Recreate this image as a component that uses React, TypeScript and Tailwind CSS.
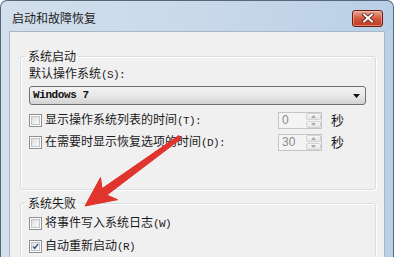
import React from "react";

const CJK = '"Noto Sans CJK SC", "Noto Sans", sans-serif';

function Latin({ children }: { children: React.ReactNode }) {
  return (
    <span className="text-[11px] tracking-[-0.6px]" style={{ fontFamily: '"Liberation Mono", monospace' }}>
      {children}
    </span>
  );
}

function CheckBox({ checked }: { checked?: boolean }) {
  return (
    <div className="w-[13px] h-[13px] shrink-0 border border-[#8e8f8f] bg-white p-[1px]">
      <div className="w-full h-full border border-[#c3c3c3] bg-gradient-to-br from-[#dedede] to-[#fbfbfb] relative">
        {checked && (
          <svg viewBox="0 0 9 9" className="absolute inset-0 w-full h-full">
            <path d="M1.5 4.5 L3.6 7 L7.6 1.4" fill="none" stroke="#3b4e85" strokeWidth="1.8" />
          </svg>
        )}
      </div>
    </div>
  );
}

function Spin({ value }: { value: string }) {
  return (
    <div className="w-[44px] h-[17px] border border-[#c5c5c5] bg-[#f4f4f4] flex">
      <div
        className="flex-1 pl-[3px] text-[12px] leading-[15px] text-[#8a8a8a]"
        style={{ fontFamily: '"Liberation Sans", sans-serif' }}
      >
        {value}
      </div>
      <div className="w-[15px] flex flex-col gap-[1px]">
        <div className="flex-1 border border-[#d2d2d2] rounded-[2px] bg-gradient-to-b from-[#f6f6f6] to-[#e6e6e6] flex items-center justify-center">
          <svg width="5" height="3" viewBox="0 0 5 3">
            <path d="M0 3 L2.5 0 L5 3 Z" fill="#a8a8a8" />
          </svg>
        </div>
        <div className="flex-1 border border-[#d2d2d2] rounded-[2px] bg-gradient-to-b from-[#f6f6f6] to-[#e6e6e6] flex items-center justify-center">
          <svg width="5" height="3" viewBox="0 0 5 3">
            <path d="M0 0 L5 0 L2.5 3 Z" fill="#a8a8a8" />
          </svg>
        </div>
      </div>
    </div>
  );
}

function Row({
  checked,
  label,
  hotkey,
  spin,
  className,
}: {
  checked?: boolean;
  label: string;
  hotkey: string;
  spin?: string;
  className?: string;
}) {
  return (
    <div className={"h-[18px] flex items-center " + (className ?? "")}>
      <CheckBox checked={checked} />
      <div className="ml-[3px] flex-1 text-[12px] leading-[14px] text-[#1b1b1b] whitespace-nowrap">
        {label}
        <Latin>{hotkey}</Latin>
      </div>
      {spin !== undefined && (
        <div className="w-[88px] flex items-center">
          <Spin value={spin} />
          <span className="ml-[9px] text-[13px] leading-[14px] text-[#1b1b1b]">秒</span>
        </div>
      )}
    </div>
  );
}

export default function App() {
  return (
    <div
      className="w-[394px] h-[257px] overflow-hidden relative rounded-t-[7px] border border-b-0 border-[#56677a] bg-gradient-to-r from-[#d3dfeb] via-[#c9d9ea] to-[#b9cfe7] flex flex-col"
      style={{ fontFamily: CJK }}
    >
      {/* title bar */}
      <div className="h-[30px] shrink-0 flex items-center justify-between pl-[11px] pr-[10px] pt-[4px]">
        <span className="text-[12px] leading-[14px] text-[#1e1e1e]">启动和故障恢复</span>
        <div className="w-[31px] h-[17px] rounded-[3px] border border-[#6b1c10] bg-gradient-to-b from-[#e9a796] via-[#d2573d] to-[#c23a1f] flex items-center justify-center shadow-[inset_0_0_0_1px_rgba(255,200,180,0.5)]">
          <svg width="12" height="10" viewBox="0 0 12 10">
            <path d="M2 1.5 L10 8.5 M10 1.5 L2 8.5" stroke="#5a1a0e" strokeWidth="3.6" strokeLinecap="square" />
            <path d="M2 1.5 L10 8.5 M10 1.5 L2 8.5" stroke="#ffffff" strokeWidth="2" strokeLinecap="square" />
          </svg>
        </div>
      </div>

      {/* client */}
      <div className="flex-1 px-[8px] flex">
        <div className="flex-1 bg-[#f0f0f0] border border-b-0 border-[#a7b7c9] pl-[10px] pr-[8px]">
          <fieldset className="mt-[17px] border border-[#d5dfe5] rounded-[3px] shadow-[inset_1px_1px_0_#ffffff,1px_1px_0_#ffffff]">
            <legend className="ml-[5px] px-[2px] text-[12px] leading-[14px] text-[#1b1b1b]">系统启动</legend>
            <div className="pl-[8px] pr-[9px] pb-[38px]">
              <div className="mt-[3px] h-[14px] text-[12px] leading-[14px] text-[#1b1b1b]">
                默认操作系统<Latin>(S):</Latin>
              </div>
              <div className="mt-[6px] h-[19px] rounded-[3px] border border-[#707070] bg-gradient-to-b from-[#f3f3f3] via-[#e8e8e8] to-[#d2d2d2] flex items-center pl-[3px] pr-[5px]">
                <span className="flex-1 text-[11px] tracking-[-0.4px] text-[#111] font-semibold" style={{ fontFamily: '"Liberation Mono", monospace' }}>
                  Windows 7
                </span>
                <svg width="7" height="4" viewBox="0 0 7 4">
                  <path d="M0 0 L7 0 L3.5 4 Z" fill="#111" />
                </svg>
              </div>
              <Row className="mt-[6px]" label="显示操作系统列表的时间" hotkey="(T):" spin="0" />
              <Row className="mt-[4px]" label="在需要时显示恢复选项的时间" hotkey="(D):" spin="30" />
            </div>
          </fieldset>

          <fieldset className="mt-[6px] border border-[#d5dfe5] rounded-[3px] shadow-[inset_1px_1px_0_#ffffff,1px_1px_0_#ffffff]">
            <legend className="ml-[5px] px-[2px] text-[12px] leading-[14px] text-[#1b1b1b]">系统失败</legend>
            <div className="pl-[8px] pr-[9px] pb-[40px]">
              <Row className="mt-[4px]" label="将事件写入系统日志" hotkey="(W)" />
              <Row className="mt-[5px]" checked label="自动重新启动" hotkey="(R)" />
            </div>
          </fieldset>
        </div>
      </div>

      {/* red annotation arrow */}
      <svg className="absolute left-[-1px] top-[-1px] pointer-events-none" width="394" height="257" viewBox="0 0 394 257">
        <polygon
          points="85,206 117.5,199.7 106.8,195.1 181.2,138.6 178.8,135.4 102.1,188.6 100.5,177.6"
          fill="#e0342c"
          stroke="#e0342c"
          strokeWidth="1"
          strokeLinejoin="round"
        />
      </svg>
    </div>
  );
}
